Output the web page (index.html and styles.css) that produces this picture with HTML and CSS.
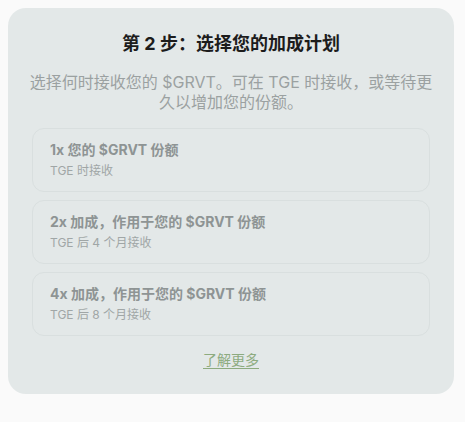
FILE: index.html
```html
<!DOCTYPE html>
<html lang="zh-CN">
<head>
    <meta charset="UTF-8">
    <meta name="viewport" content="width=device-width, initial-scale=1.0">
    <title>选择您的加成计划</title>
    <link rel="stylesheet" href="styles.css">
</head>
<body>
    <div class="step-card">
        <h2 class="step-title">第 2 步：选择您的加成计划</h2>
        <p class="step-desc">选择何时接收您的 $GRVT。可在 TGE 时接收，或等待更久以增加您的份额。</p>
        <div class="plans">
            <div class="plan">
                <div class="plan-name">1x 您的 $GRVT 份额</div>
                <div class="plan-when">TGE 时接收</div>
            </div>
            <div class="plan">
                <div class="plan-name">2x 加成，作用于您的 $GRVT 份额</div>
                <div class="plan-when">TGE 后 4 个月接收</div>
            </div>
            <div class="plan">
                <div class="plan-name">4x 加成，作用于您的 $GRVT 份额</div>
                <div class="plan-when">TGE 后 8 个月接收</div>
            </div>
        </div>
        <a class="learn-more" href="#">了解更多</a>
    </div>
</body>
</html>
```

FILE: styles.css
```css
body {
    margin: 8px;
    background-color: #fafafa;
    font-family: Inter, "Noto Sans CJK SC", sans-serif;
}
.step-card {
    width: 446px;
    box-sizing: border-box;
    background-color: #e3e8e8;
    border-radius: 18px;
    padding: 24px 24px 24px;
    display: flex;
    flex-direction: column;
    align-items: center;
}
.step-title {
    margin: 0;
    font-size: 18px;
    line-height: 24px;
    font-weight: 700;
    color: #1c1c1c;
}
.step-desc {
    margin: 16px -8px 0;
    font-size: 16px;
    line-height: 20px;
    color: #9ba1a1;
    text-align: center;
}
.plans {
    align-self: stretch;
    display: flex;
    flex-direction: column;
    gap: 8px;
    margin-top: 16px;
}
.plan {
    border: 1px solid #d9dfdf;
    border-radius: 12px;
    padding: 11px 17px;
}
.plan-name {
    font-size: 14px;
    line-height: 20px;
    font-weight: 700;
    color: #8e9494;
}
.plan-when {
    margin-top: 2px;
    font-size: 12px;
    line-height: 18px;
    color: #a0a6a6;
}
.learn-more {
    margin-top: 14px;
    font-size: 14px;
    line-height: 20px;
    color: #8dab7f;
    text-decoration: underline;
    text-underline-offset: 3px;
}
```
